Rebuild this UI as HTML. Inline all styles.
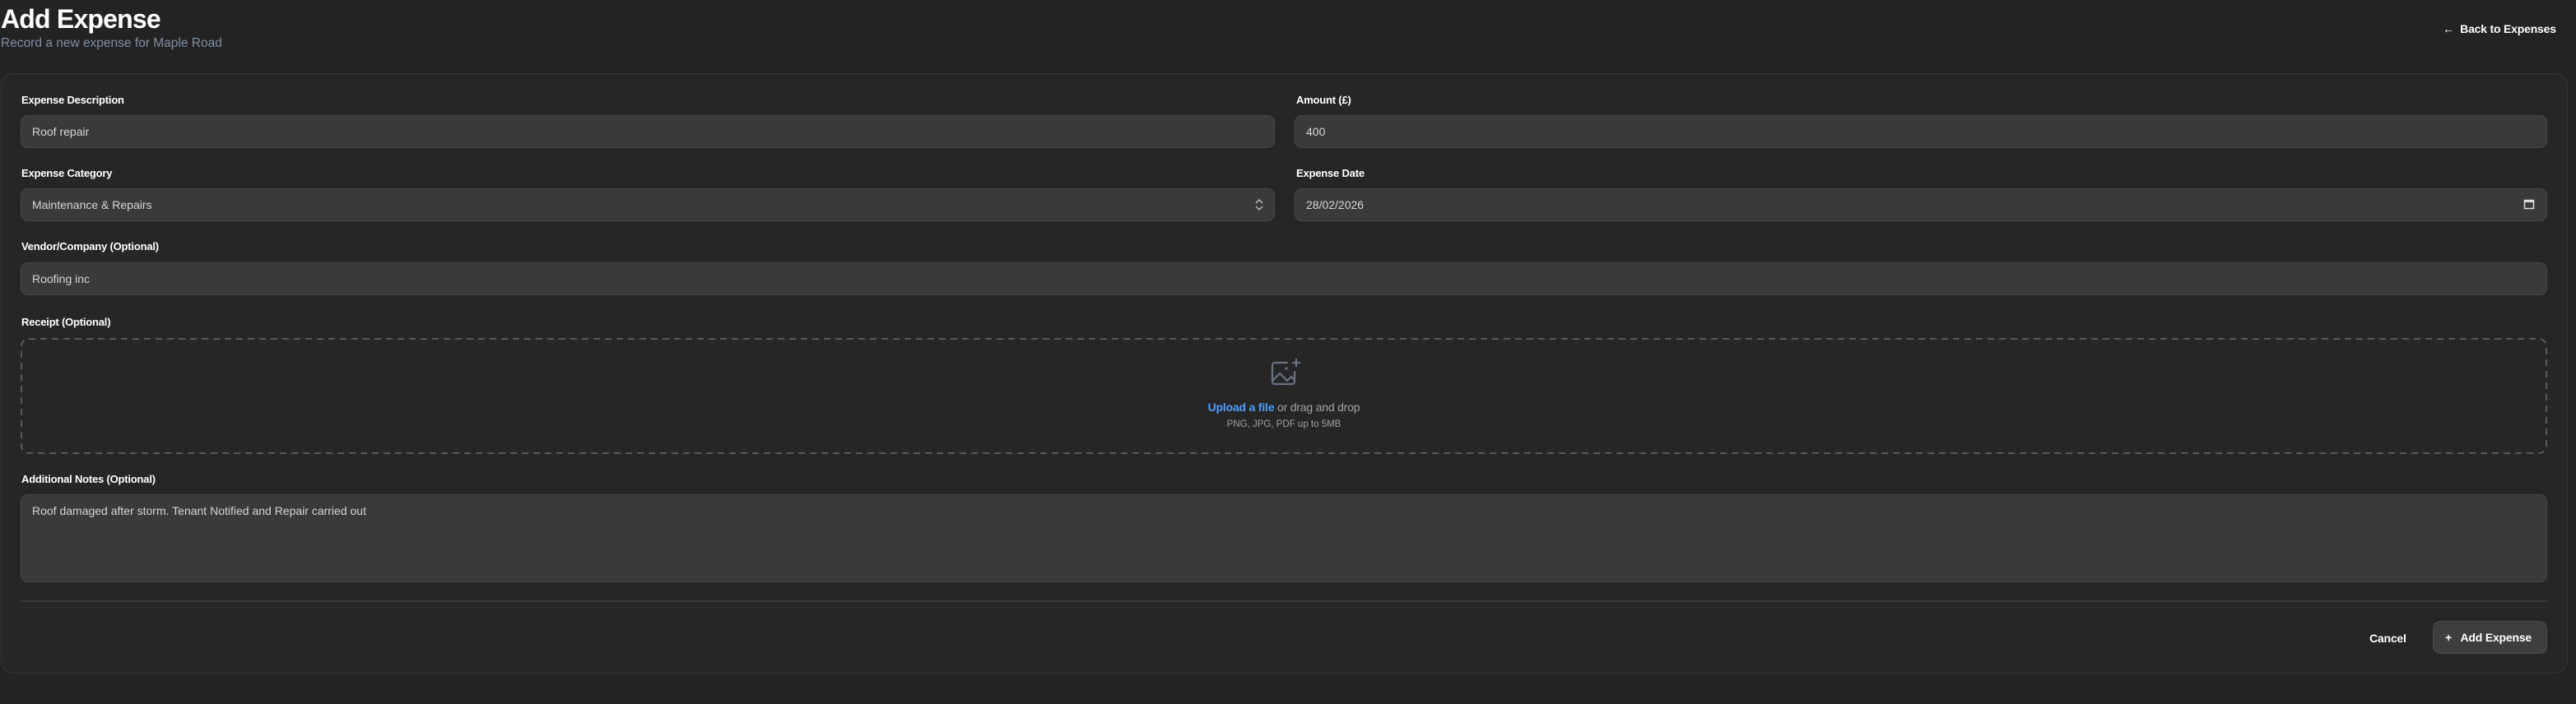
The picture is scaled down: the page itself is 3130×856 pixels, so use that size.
<!DOCTYPE html>
<html><head><style>
*{box-sizing:border-box;margin:0;padding:0}
body{width:3130px;height:856px;background:#232323;font-family:"Liberation Sans",sans-serif;position:relative;overflow:hidden;color:#fff}
.a{position:absolute}
h1{position:absolute;left:1px;top:5px;font-size:32px;font-weight:bold;color:#fff;letter-spacing:-0.8px}
.sub{left:1px;top:44px;font-size:15.5px;color:#7f8fa3}
.card{left:1px;top:89px;width:3119px;height:730px;border:1.5px solid #363636;border-radius:16px;background:#262626}
.lbl{font-size:13px;font-weight:bold;color:#fff;letter-spacing:-0.2px}
.in{background:#3a3a3a;border:1.5px solid #474747;border-radius:9px;height:40px;font-size:14px;color:#d6d6d6;padding:11px 13px}
</style></head><body>
<h1>Add Expense</h1>
<div class="a sub">Record a new expense for Maple Road</div>
<div class="a" style="left:2968px;top:27px;font-size:14px;font-weight:bold;color:#fff;letter-spacing:-0.2px">&#8592;&nbsp;&nbsp;Back to Expenses</div>
<div class="a card"></div>

<div class="a lbl" style="left:26px;top:114px">Expense Description</div>
<div class="a in" style="left:25px;top:140px;width:1524px">Roof repair</div>
<div class="a lbl" style="left:1575px;top:114px">Amount (£)</div>
<div class="a in" style="left:1573px;top:140px;width:1522px">400</div>

<div class="a lbl" style="left:26px;top:203px">Expense Category</div>
<div class="a in" style="left:25px;top:229px;width:1524px">Maintenance &amp; Repairs
<svg class="a" style="right:12px;top:11px" width="12" height="16" viewBox="0 0 12 16"><path d="M2 6l4-4 4 4M2 10l4 4 4-4" stroke="#bbb" stroke-width="1.5" fill="none"/></svg></div>
<div class="a lbl" style="left:1575px;top:203px">Expense Date</div>
<div class="a in" style="left:1573px;top:229px;width:1522px">28/02/2026
<svg class="a" style="right:14px;top:11px" width="14" height="14" viewBox="0 0 14 14"><rect x="1.5" y="2.5" width="11" height="10" stroke="#ddd" stroke-width="1.5" fill="none"/><rect x="1.5" y="2.5" width="11" height="2.5" fill="#ddd"/></svg></div>

<div class="a lbl" style="left:26px;top:292px">Vendor/Company (Optional)</div>
<div class="a in" style="left:25px;top:319px;width:3070px">Roofing inc</div>

<div class="a lbl" style="left:26px;top:384px">Receipt (Optional)</div>
<svg class="a" style="left:25px;top:411px" width="3070" height="141"><rect x="1" y="1" width="3068" height="139" rx="9" fill="none" stroke="#595959" stroke-width="2" stroke-dasharray="8 6"/></svg>
<svg class="a" style="left:1542px;top:434px" width="42" height="42" viewBox="0 0 42 42" fill="none" stroke="#6b7280" stroke-width="2.2" stroke-linecap="round"><path d="M22 7H7a3 3 0 0 0-3 3v20a3 3 0 0 0 3 3h21a3 3 0 0 0 3-3V18"/><path d="M4 29l9-9 9 9 5-5 4 4"/><path d="M33 3v8M29 7h8"/><circle cx="21" cy="14" r="0.6"/></svg>
<div class="a" style="left:1360px;width:400px;text-align:center;top:487px;font-size:14px;color:#a3a3a3;letter-spacing:-0.2px"><span style="color:#4a9eff;font-weight:bold">Upload a file</span> or drag and drop</div>
<div class="a" style="left:1360px;width:400px;text-align:center;top:510px;font-size:11.5px;color:#a0a0a0">PNG, JPG, PDF up to 5MB</div>

<div class="a lbl" style="left:26px;top:575px">Additional Notes (Optional)</div>
<div class="a in" style="left:25px;top:601px;width:3070px;height:107px">Roof damaged after storm. Tenant Notified and Repair carried out</div>

<div class="a" style="left:25px;top:730px;width:3070px;height:1.5px;background:#383838"></div>
<div class="a" style="left:2879px;top:768px;font-size:14px;font-weight:bold;color:#fff;letter-spacing:-0.2px">Cancel</div>
<div class="a" style="left:2956px;top:755px;width:139px;height:40px;background:#3e3e3e;border:1.5px solid #4a4a4a;border-radius:9px;font-size:14px;font-weight:bold;color:#fff;padding:11px 0 0 14px;letter-spacing:-0.2px">+&nbsp;&nbsp; Add Expense</div>
</body></html>
